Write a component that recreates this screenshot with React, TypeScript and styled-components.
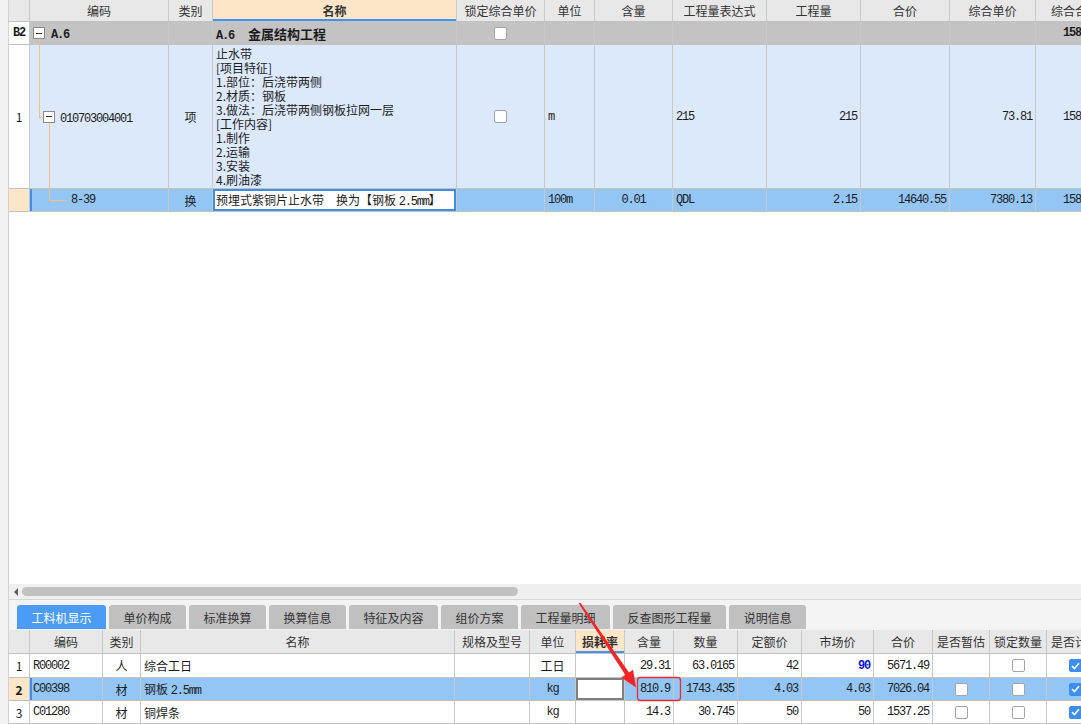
import React from "react";
import styled, { createGlobalStyle } from "styled-components";

const GlobalStyle = createGlobalStyle`
  html, body {
    margin: 0;
    padding: 0;
    overflow: hidden;
    background: #fff;
  }
  body {
    font-family: "Noto Sans CJK SC", "Liberation Sans", sans-serif;
    font-size: 12px;
    color: #1c1c1c;
  }
`;

const TOP_COLS = "21px 139px 44px 244px 88px 50px 78px 94px 94px 89px 86px 79px";
const BOTTOM_COLS = "21px 73px 38px 314px 75px 46px 49px 49px 64px 64px 72px 59px 57px 57px 57px";

const topHeads = ["", "编码", "类别", "名称", "锁定综合单价", "单位", "含量", "工程量表达式", "工程量", "合价", "综合单价", "综合合价"];
const bottomHeads = ["", "编码", "类别", "名称", "规格及型号", "单位", "损耗率", "含量", "数量", "定额价", "市场价", "合价", "是否暂估", "锁定数量", "是否计价"];
const tabs = ["工料机显示", "单价构成", "标准换算", "换算信息", "特征及内容", "组价方案", "工程量明细", "反查图形工程量", "说明信息"];

const billLines = [
  "止水带",
  "[项目特征]",
  "1.部位：后浇带两侧",
  "2.材质：钢板",
  "3.做法：后浇带两侧钢板拉网一层",
  "[工作内容]",
  "1.制作",
  "2.运输",
  "3.安装",
  "4.刷油漆",
];

type Material = {
  idx: string;
  code: string;
  kind: string;
  name: React.ReactNode;
  unit: string;
  cnUnit?: boolean;
  qty: string;
  amount: string;
  base: string;
  market: string;
  hot?: boolean;
  total: string;
  est: boolean;
  selected?: boolean;
};

const Page = styled.div`
  position: relative;
  display: flex;
  width: 1081px;
  height: 724px;
  overflow: hidden;
  background: #fff;
`;

const SideStrip = styled.div`
  width: 8px;
  flex: none;
  background: #f2f2f2;
  border-right: 1px solid #d2d2d2;
`;

const Main = styled.div`
  flex: 1;
  min-width: 0;
  display: flex;
  flex-direction: column;
  overflow: hidden;
`;

const TopArea = styled.div`
  height: 584px;
  flex: none;
  overflow: hidden;
  background: #fff;
`;

const GridRow = styled.div<{ $cols: string; $h: number; $bg?: string }>`
  display: grid;
  grid-template-columns: ${(p) => p.$cols};
  height: ${(p) => p.$h}px;
  width: max-content;
  box-sizing: border-box;
  background: ${(p) => p.$bg || "#fff"};
  border-bottom: 1px solid #c2c2c2;
`;

const HeadCell = styled.div<{ $active?: boolean }>`
  display: flex;
  align-items: center;
  justify-content: center;
  white-space: nowrap;
  overflow: hidden;
  color: #333;
  border-right: 1px solid #c8c8c8;
  background: ${(p) => (p.$active ? "#fde6c8" : "#e8e8e8")};
  font-weight: ${(p) => (p.$active ? 700 : 400)};
  box-shadow: ${(p) => (p.$active ? "inset 0 -2px 0 #3d95f0" : "none")};
`;

const Cell = styled.div<{
  $align?: "left" | "center" | "right";
  $bg?: string;
  $indent?: number;
  $mark?: boolean;
  $edit?: string;
}>`
  position: relative;
  display: flex;
  align-items: center;
  justify-content: ${(p) => (p.$align === "right" ? "flex-end" : p.$align === "center" ? "center" : "flex-start")};
  padding: 0 3px 0 ${(p) => (p.$indent ?? 3)}px;
  box-sizing: border-box;
  white-space: nowrap;
  border-right: 1px solid #c8c8c8;
  background: ${(p) => (p.$edit ? "#fff" : p.$bg || "transparent")};
  box-shadow: ${(p) =>
    p.$edit ? `inset 0 0 0 2px ${p.$edit}` : p.$mark ? "inset 2px 0 0 #3d8ef0" : "none"};
`;

const IndexCell = styled(Cell)<{ $sel?: boolean }>`
  justify-content: center;
  padding: 0;
  background: ${(p) => (p.$sel ? "#fde6c8" : "#fff")};
  font-weight: ${(p) => (p.$sel ? 700 : 400)};
`;

const Line = styled.span`
  white-space: pre;
`;

const Mono = styled.span<{ $bold?: boolean }>`
  font-family: "Liberation Mono", "DejaVu Sans Mono", monospace;
  font-size: 12px;
  letter-spacing: -1.2px;
  font-weight: ${(p) => (p.$bold ? 700 : 400)};
`;

const Hot = styled(Mono)`
  color: #0a16e8;
  font-weight: 700;
`;

const Title = styled.span`
  margin-left: 14px;
  font-size: 13px;
  font-weight: 700;
`;

const NameLines = styled.div`
  line-height: 14px;
  white-space: pre-line;
`;

const Check = styled.span<{ $on?: boolean }>`
  width: 13px;
  height: 13px;
  box-sizing: border-box;
  display: inline-flex;
  align-items: center;
  justify-content: center;
  border-radius: 2px;
  border: 1px solid ${(p) => (p.$on ? "#3c8ef0" : "#a5a5a5")};
  background: ${(p) => (p.$on ? "#3c8ef0" : "#fff")};
`;

const MinusBox = styled.span`
  position: relative;
  z-index: 1;
  flex: none;
  width: 12px;
  height: 12px;
  box-sizing: border-box;
  display: inline-flex;
  align-items: center;
  justify-content: center;
  border: 1px solid #8a8a8a;
  background: #fff;
  &::after {
    content: "";
    width: 6px;
    height: 1px;
    background: #333;
  }
`;

const CodeText = styled.span<{ $gap: number }>`
  margin-left: ${(p) => p.$gap}px;
`;

const Elbow = styled.span<{ $left: number; $width: number; $height: number }>`
  position: absolute;
  left: ${(p) => p.$left}px;
  top: -1px;
  width: ${(p) => p.$width}px;
  height: ${(p) => p.$height}px;
  border-left: 1px solid #f6c07c;
  border-bottom: 1px solid #f6c07c;
`;

const Stem = styled.span<{ $left: number; $top: number }>`
  position: absolute;
  left: ${(p) => p.$left}px;
  top: ${(p) => p.$top}px;
  bottom: -1px;
  border-left: 1px solid #f6c07c;
`;

const HScroll = styled.div`
  height: 15px;
  flex: none;
  display: flex;
  align-items: center;
  gap: 4px;
  padding-left: 5px;
  background: #f0f0f0;
  border-bottom: 1px solid #d6d6d6;
`;

const ScrollArrow = styled.span`
  width: 0;
  height: 0;
  border-top: 4px solid transparent;
  border-bottom: 4px solid transparent;
  border-right: 4px solid #5e5e5e;
`;

const ScrollThumb = styled.span`
  width: 496px;
  height: 9px;
  border-radius: 5px;
  background: #c1c1c1;
`;

const TabBar = styled.div`
  height: 30px;
  flex: none;
  box-sizing: border-box;
  display: flex;
  align-items: flex-end;
  gap: 3px;
  padding: 0 0 1px 8px;
  background: #f3f3f3;
`;

const Tab = styled.div<{ $active?: boolean }>`
  height: 24px;
  padding: 0 14.5px;
  display: flex;
  align-items: center;
  white-space: nowrap;
  border-radius: 3px 3px 0 0;
  background: ${(p) => (p.$active ? "#4a9cf7" : "#c0c0c0")};
  color: ${(p) => (p.$active ? "#fff" : "#333")};
`;

const BottomArea = styled.div`
  flex: 1;
  overflow: hidden;
  background: #fff;
`;

const Annotation = styled.svg`
  position: absolute;
  left: 0;
  top: 0;
  pointer-events: none;
`;

const materials: Material[] = [
  { idx: "1", code: "R00002", kind: "人", name: "综合工日", unit: "工日", cnUnit: true, qty: "29.31", amount: "63.0165", base: "42", market: "90", hot: true, total: "5671.49", est: false },
  {
    idx: "2",
    code: "C00398",
    kind: "材",
    name: (
      <Line>
        钢板 <Mono>2.5mm</Mono>
      </Line>
    ),
    unit: "kg",
    qty: "810.9",
    amount: "1743.435",
    base: "4.03",
    market: "4.03",
    total: "7026.04",
    est: true,
    selected: true,
  },
  { idx: "3", code: "C01280", kind: "材", name: "铜焊条", unit: "kg", qty: "14.3", amount: "30.745", base: "50", market: "50", total: "1537.25", est: true },
];

function Tick() {
  return (
    <svg width="9" height="8" viewBox="0 0 9 8">
      <path d="M1 4.2 L3.5 6.5 L8 1.3" fill="none" stroke="#fff" strokeWidth="1.6" />
    </svg>
  );
}

export default function App() {
  return (
    <Page>
      <GlobalStyle />
      <SideStrip />
      <Main>
        <TopArea>
          <GridRow $cols={TOP_COLS} $h={22}>
            {topHeads.map((h, i) => (
              <HeadCell key={i} $active={h === "名称"}>
                {h}
              </HeadCell>
            ))}
          </GridRow>

          <GridRow $cols={TOP_COLS} $h={23} $bg="#c3c3c3">
            <IndexCell>
              <Mono $bold>B2</Mono>
            </IndexCell>
            <Cell>
              <MinusBox />
              <CodeText $gap={6}>
                <Mono $bold>A.6</Mono>
              </CodeText>
              <Stem $left={9} $top={17} />
            </Cell>
            <Cell />
            <Cell>
              <Line>
                <Mono $bold>A.6</Mono>
                <Title>金属结构工程</Title>
              </Line>
            </Cell>
            <Cell $align="center">
              <Check />
            </Cell>
            <Cell />
            <Cell />
            <Cell />
            <Cell />
            <Cell />
            <Cell />
            <Cell $align="right">
              <Mono $bold>15869.15</Mono>
            </Cell>
          </GridRow>

          <GridRow $cols={TOP_COLS} $h={144} $bg="#dce9fb">
            <IndexCell>1</IndexCell>
            <Cell $indent={13}>
              <Elbow $left={9} $width={3} $height={73} />
              <MinusBox />
              <CodeText $gap={5}>
                <Mono>010703004001</Mono>
              </CodeText>
              <Stem $left={19} $top={78} />
            </Cell>
            <Cell $align="center">项</Cell>
            <Cell>
              <NameLines>{billLines.join("\n")}</NameLines>
            </Cell>
            <Cell $align="center">
              <Check />
            </Cell>
            <Cell>
              <Mono>m</Mono>
            </Cell>
            <Cell />
            <Cell>
              <Mono>215</Mono>
            </Cell>
            <Cell $align="right">
              <Mono>215</Mono>
            </Cell>
            <Cell />
            <Cell $align="right">
              <Mono>73.81</Mono>
            </Cell>
            <Cell $align="right">
              <Mono>15869.15</Mono>
            </Cell>
          </GridRow>

          <GridRow $cols={TOP_COLS} $h={23} $bg="#93c6f5">
            <IndexCell $sel />
            <Cell $indent={41} $mark>
              <Elbow $left={19} $width={17} $height={12} />
              <Mono>8-39</Mono>
            </Cell>
            <Cell $align="center">换</Cell>
            <Cell $edit="#3a8ee8">
              <Line>
                预埋式紫铜片止水带　换为【钢板 <Mono>2.5mm</Mono>】
              </Line>
            </Cell>
            <Cell />
            <Cell>
              <Mono>100m</Mono>
            </Cell>
            <Cell $align="center">
              <Mono>0.01</Mono>
            </Cell>
            <Cell>
              <Mono>QDL</Mono>
            </Cell>
            <Cell $align="right">
              <Mono>2.15</Mono>
            </Cell>
            <Cell $align="right">
              <Mono>14640.55</Mono>
            </Cell>
            <Cell $align="right">
              <Mono>7380.13</Mono>
            </Cell>
            <Cell $align="right">
              <Mono>15867.28</Mono>
            </Cell>
          </GridRow>
        </TopArea>

        <HScroll>
          <ScrollArrow />
          <ScrollThumb />
        </HScroll>

        <TabBar>
          {tabs.map((t, i) => (
            <Tab key={t} $active={i === 0}>
              {t}
            </Tab>
          ))}
        </TabBar>

        <BottomArea>
          <GridRow $cols={BOTTOM_COLS} $h={24}>
            {bottomHeads.map((h, i) => (
              <HeadCell key={i} $active={h === "损耗率"}>
                {h}
              </HeadCell>
            ))}
          </GridRow>
          {materials.map((m, i) => (
            <GridRow key={m.code} $cols={BOTTOM_COLS} $h={i === 0 ? 24 : 23} $bg={m.selected ? "#93c6f5" : "#fff"}>
              <IndexCell $sel={m.selected}>{m.idx}</IndexCell>
              <Cell $mark={m.selected}>
                <Mono>{m.code}</Mono>
              </Cell>
              <Cell $align="center">{m.kind}</Cell>
              <Cell>{m.name}</Cell>
              <Cell />
              <Cell $align="center">{m.cnUnit ? m.unit : <Mono>{m.unit}</Mono>}</Cell>
              <Cell $edit={m.selected ? "#7f7f7f" : undefined} />
              <Cell $align="right">
                <Mono>{m.qty}</Mono>
              </Cell>
              <Cell $align="right">
                <Mono>{m.amount}</Mono>
              </Cell>
              <Cell $align="right">
                <Mono>{m.base}</Mono>
              </Cell>
              <Cell $align="right">{m.hot ? <Hot>{m.market}</Hot> : <Mono>{m.market}</Mono>}</Cell>
              <Cell $align="right">
                <Mono>{m.total}</Mono>
              </Cell>
              <Cell $align="center">{m.est && <Check />}</Cell>
              <Cell $align="center">
                <Check />
              </Cell>
              <Cell $align="center">
                <Check $on>
                  <Tick />
                </Check>
              </Cell>
            </GridRow>
          ))}
        </BottomArea>
      </Main>

      <Annotation width="1081" height="724" viewBox="0 0 1081 724">
        <rect x="637.5" y="677.5" width="43" height="23" rx="3" fill="none" stroke="#ee2c2c" strokeWidth="1.3" />
        <polygon
          points="580.2,602.6 629,672.5 633,669.8 636,687.5 621.4,677.6 625.4,674.9 578.8,603.4"
          fill="#f42424"
        />
      </Annotation>
    </Page>
  );
}
